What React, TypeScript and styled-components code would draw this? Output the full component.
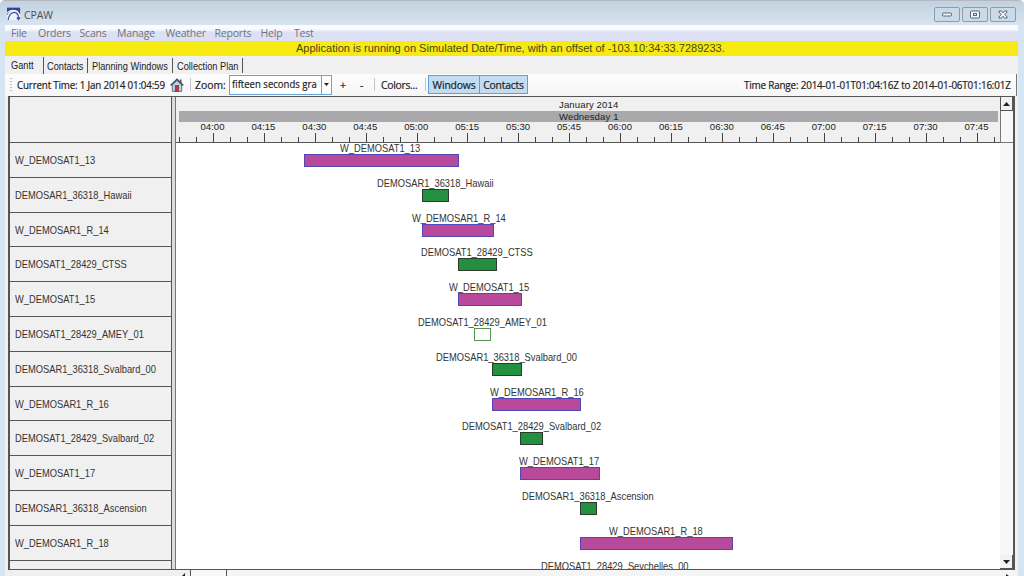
import React from "react";
import styled, { createGlobalStyle, css } from "styled-components";

const Global = createGlobalStyle`
  * { box-sizing: border-box; }
  html, body { margin: 0; padding: 0; overflow: hidden; }
`;

const ui = `"Open Sans", "Noto Sans", sans-serif`;
const sans = `"Liberation Sans", Arial, sans-serif`;

const Frame = styled.div`
  width: 1024px;
  height: 576px;
  overflow: hidden;
  display: flex;
  flex-direction: column;
  background: #d6e5f2;
  border-top: 1px solid #b4b9c1;
  border-radius: 5px 5px 0 0;
  color: #333;
`;

const Condensed = styled.span<{ $k: number }>`
  display: inline-block;
  transform: scaleX(${(p) => p.$k});
  transform-origin: left center;
  white-space: nowrap;
`;

const TitleBar = styled.header`
  height: 24px;
  flex: none;
  display: flex;
  align-items: flex-start;
  padding: 6px 8px 0 7px;
  background: linear-gradient(#c3d0df, #cddae7 50%, #d8e5f0);
`;

const Title = styled.h1`
  margin: 0 auto 0 3px;
  font: 400 10.5px/16px ${ui};
  letter-spacing: -0.1px;
  color: #4a4f57;
`;

const WinButtons = styled.div`
  display: flex;
  gap: 2px;
`;

const WinButton = styled.button`
  width: 26px;
  height: 15px;
  padding: 0;
  display: grid;
  place-items: center;
  background: #cbdae8;
  border: 1px solid #8d9cae;
  border-radius: 2px;
`;

const Client = styled.div`
  flex: 1;
  min-height: 0;
  margin: 0 6px 0 5px;
  display: flex;
  flex-direction: column;
  background: #f0f0f1;
`;

const MenuBar = styled.nav`
  height: 16px;
  flex: none;
  display: flex;
  padding-left: 6px;
  background: linear-gradient(#fafbfe 0 25%, #dde1f2 45%, #dce0f2);
`;

const MenuItem = styled.span<{ $w: number }>`
  width: ${(p) => p.$w}px;
  font: 400 10.5px/16px ${ui};
  letter-spacing: -0.2px;
  color: #70737f;
`;

const Banner = styled.div`
  height: 15px;
  flex: none;
  padding-left: 291px;
  background: #f6ea12;
  font: 400 11.5px/15px ${sans};
  white-space: nowrap;
  color: #4a4619;
`;

const Tabs = styled.div`
  height: 18px;
  flex: none;
  display: flex;
  align-items: flex-end;
  padding-left: 6px;
`;

const Tab = styled.span<{ $w: number; $active?: boolean }>`
  width: ${(p) => p.$w}px;
  height: ${(p) => (p.$active ? 17 : 15)}px;
  margin-bottom: ${(p) => (p.$active ? 0 : 1)}px;
  padding-left: ${(p) => (p.$active ? 0 : 3.5)}px;
  border-right: 1px solid #555;
  font: 400 10.6px/${(p) => (p.$active ? 16 : 17)}px ${sans};
  white-space: nowrap;
  color: #222;
`;

const Toolbar = styled.div`
  height: 22px;
  flex: none;
  display: flex;
  align-items: center;
  padding: 0 0 1px 5px;
  margin-right: 1px;
  background: linear-gradient(#fdfdfd, #f6f6f7);
  border-right: 1px solid #777;
  font: 400 10.4px/20px ${ui};
  white-space: nowrap;
  color: #222;
`;

const Grip = styled.i`
  width: 2px;
  height: 13px;
  background: repeating-linear-gradient(#b9bcc4 0 1px, transparent 1px 3px);
`;

const ToolText = styled.span<{ $w: number; $ls?: number; $ml?: number; $end?: boolean }>`
  width: ${(p) => p.$w}px;
  margin-left: ${(p) => (p.$end ? "auto" : `${p.$ml ?? 0}px`)};
  letter-spacing: ${(p) => p.$ls ?? 0}px;
  -webkit-text-stroke: 0.2px currentColor;
`;

const Divider = styled.i<{ $ml: number }>`
  width: 1px;
  height: 13px;
  margin-left: ${(p) => p.$ml}px;
  background: #c4c5ca;
`;

const Combo = styled.div`
  width: 103px;
  height: 20px;
  display: flex;
  border: 1px solid #68a2da;
  background: #fff;
`;

const ComboValue = styled.span`
  width: 91px;
  padding-left: 2px;
  line-height: 17px;
  -webkit-text-stroke: 0.2px currentColor;
`;

const ComboArrow = styled.span`
  flex: 1;
  display: grid;
  place-items: center;
  border-left: 1px solid #68a2da;
`;

const Toggles = styled.div`
  display: flex;
  margin-left: 2px;
`;

const Toggle = styled.button<{ $w: number }>`
  width: ${(p) => p.$w}px;
  height: 19px;
  margin-right: -1px;
  padding: 0;
  border: 1px solid #5fa0dc;
  background: #c1dcf3;
  font: 400 10.4px/16px ${ui};
  letter-spacing: -0.2px;
  -webkit-text-stroke: 0.2px currentColor;
  color: #222;
`;

const Chart = styled.main`
  height: 474px;
  flex: none;
  margin: 0 3px 0 3px;
  display: flex;
  border: 1px solid #555;
  border-left-width: 2px;
  border-right-width: 2px;
  overflow: hidden;
`;

const NameColumn = styled.aside`
  width: 162px;
  flex: none;
  border-right: 1px solid #555;
`;

const NameHead = styled.div`
  height: 46px;
  border-bottom: 1px solid #555;
`;

const label = css`
  font: 400 10.6px/13px ${sans};
  white-space: nowrap;
  color: #333;
`;

const NameCell = styled.div`
  ${label}
  height: 34.8px;
  padding: 11px 0 0 5px;
  border-bottom: 1px solid #555;
`;

const Splitter = styled.div`
  width: 4px;
  flex: none;
  background: #dcdcdd;
  border-right: 1px solid #777;
`;

const Timeline = styled.section`
  flex: 1;
  min-width: 0;
  display: flex;
  flex-direction: column;
`;

const Scale = styled.div`
  height: 46px;
  flex: none;
  display: flex;
  flex-direction: column;
  padding: 0 2px 0 3px;
  border-bottom: 1px solid #555;
  overflow: hidden;
`;

const Month = styled.div<{ $day?: boolean }>`
  height: ${(p) => (p.$day ? 11 : 14)}px;
  flex: none;
  padding-left: 380px;
  background: ${(p) => (p.$day ? "#a9a9ac" : "#f0f0f1")};
  font: 400 9.6px/${(p) => (p.$day ? 11 : 15)}px ${sans};
  letter-spacing: 0.1px;
  white-space: nowrap;
  color: #222;
`;

const Hours = styled.div`
  height: 11px;
  flex: none;
  display: flex;
  padding-left: 8px;
`;

const Hour = styled.span`
  width: 50.95px;
  flex: none;
  text-align: center;
  font: 400 9.6px/10px ${sans};
  color: #222;
`;

const Ticks = styled.div`
  flex: 1;
  display: flex;
  align-items: flex-end;
`;

const Tick = styled.i<{ $major: boolean }>`
  width: 16.983px;
  flex: none;
  height: ${(p) => (p.$major ? 9 : 5)}px;
  border-left: 1px solid #444;
`;

const Lanes = styled.div`
  flex: 1;
  min-height: 0;
  overflow: hidden;
  background: #fff;
`;

const Lane = styled.div`
  height: 34.8px;
  display: flex;
  flex-direction: column;
  align-items: flex-start;
`;

const LaneLabel = styled.span<{ $x: number }>`
  ${label}
  height: 11px;
  margin-left: ${(p) => p.$x - 176}px;
  line-height: 10px;
`;

const kinds = {
  window: css`
    background: #b9499b;
    border: 1px solid #5148b5;
  `,
  contact: css`
    background: #23903f;
    border: 1px solid #2c3b2d;
  `,
  empty: css`
    background: #fff;
    border: 1px solid #55924f;
  `,
};

type Kind = keyof typeof kinds;

const Bar = styled.div<{ $x: number; $w: number; $kind: Kind }>`
  height: 13px;
  margin-left: ${(p) => p.$x - 176}px;
  width: ${(p) => p.$w}px;
  ${(p) => kinds[p.$kind]}
`;

const Scroll = styled.div`
  width: 13px;
  flex: none;
  display: flex;
  flex-direction: column;
  background: #f7f7f7;
`;

const ScrollButton = styled.span<{ $bottom?: boolean }>`
  height: 14px;
  flex: none;
  display: grid;
  place-items: center;
  background: #f2f2f2;
  border: 1px solid #555;
  border-width: ${(p) => (p.$bottom ? "0 1px 1px 0" : "0 1px 1px 1px")};
`;

const ScrollThumb = styled.span`
  height: 32px;
  flex: none;
  background: #f7f7f7;
  border: 1px solid #777;
  border-width: 0 0 1px 1px;
`;

const ScrollTrack = styled.span`
  flex: 1;
`;

const BottomScroll = styled.footer`
  flex: 1;
  display: flex;
  align-items: flex-start;
  padding-left: 176px;
`;

const BottomThumb = styled.span`
  width: 37px;
  height: 6px;
  margin-left: 3px;
  border: 1px solid #555;
  border-width: 0 1px;
  background: #f8f8f8;
`;

const BottomTrack = styled.span`
  flex: 1;
  height: 6px;
  background: #f5f5f5;
  display: flex;
  justify-content: flex-end;
  padding: 4px 9px 0 0;
`;

const Triangle = ({ up = false, size = 7 }: { up?: boolean; size?: number }) => (
  <svg width={size} height={size > 6 ? 4 : 3} viewBox="0 0 8 4" preserveAspectRatio="none">
    <path d={up ? "M0 4L4 0L8 4Z" : "M0 0H8L4 4Z"} fill="#222" />
  </svg>
);

const AppIcon = () => (
  <svg width="14" height="14" viewBox="0 0 14 14">
    <rect width="13.5" height="13" fill="#eef2f9" />
    <path d="M0 0.5H13.2V7.5L10.5 3.8L7 3L3 4.5L0 8Z" fill="#3243a3" />
    <path d="M0 6Q4 2.800 7.500 3.600Q11 4.500 11.600 8" fill="none" stroke="#f3f6fc" strokeWidth="1.2" />
    <path d="M1.2 13Q1.500 8.500 5 6Q10 4 11.500 9.500V12.500M9.800 10.500L11.500 12.500L13.200 10.500" fill="none" stroke="#3f51a4" strokeWidth="1.2" />
  </svg>
);

const HomeIcon = () => (
  <svg width="14" height="14" viewBox="0 0 14 14">
    <path d="M10 1.5H11.5V5H10Z" fill="#8a3b3b" />
    <path d="M2.3 7L7 2.5L11.7 7V13.3H2.3Z" fill="#c6d5e3" stroke="#456078" strokeWidth="0.9" />
    <path d="M0.7 7.5L7 1.3L13.3 7.5" fill="none" stroke="#34516e" strokeWidth="1.6" />
    <rect x="5.2" y="7.3" width="3.6" height="6" fill="#b13c43" stroke="#6d3842" strokeWidth="0.6" />
  </svg>
);

const glyph = { fill: "#f3f6f9", stroke: "#5b6672", strokeWidth: 1 };

const menu: [string, number][] = [
  ["File", 27], ["Orders", 41.5], ["Scans", 37.5], ["Manage", 48.5],
  ["Weather", 49], ["Reports", 46], ["Help", 33.5], ["Test", 30],
];

const hours = Array.from({ length: 16 }, (_, i) => {
  const m = 240 + i * 15;
  return `0${Math.floor(m / 60)}:${String(m % 60).padStart(2, "0")}`;
});

interface Row { name: string; labelX: number; x: number; w: number; kind: Kind }

const rows: Row[] = [
  { name: "W_DEMOSAT1_13", labelX: 340, x: 304, w: 155, kind: "window" },
  { name: "DEMOSAR1_36318_Hawaii", labelX: 376.5, x: 422, w: 27, kind: "contact" },
  { name: "W_DEMOSAR1_R_14", labelX: 411.5, x: 422, w: 72, kind: "window" },
  { name: "DEMOSAT1_28429_CTSS", labelX: 421, x: 457.5, w: 39.5, kind: "contact" },
  { name: "W_DEMOSAT1_15", labelX: 449, x: 457.5, w: 64, kind: "window" },
  { name: "DEMOSAT1_28429_AMEY_01", labelX: 418, x: 474, w: 17, kind: "empty" },
  { name: "DEMOSAR1_36318_Svalbard_00", labelX: 436, x: 492, w: 30, kind: "contact" },
  { name: "W_DEMOSAR1_R_16", labelX: 490, x: 492, w: 89, kind: "window" },
  { name: "DEMOSAT1_28429_Svalbard_02", labelX: 462, x: 520, w: 23, kind: "contact" },
  { name: "W_DEMOSAT1_17", labelX: 519, x: 520, w: 80, kind: "window" },
  { name: "DEMOSAR1_36318_Ascension", labelX: 522, x: 580, w: 17, kind: "contact" },
  { name: "W_DEMOSAR1_R_18", labelX: 609, x: 580, w: 153, kind: "window" },
];

const NAME_SCALE = 0.88;

export default function App() {
  return (
    <>
      <Global />
      <Frame>
        <TitleBar>
          <AppIcon />
          <Title>CPAW</Title>
          <WinButtons>
            <WinButton aria-label="Minimize">
              <svg width="10" height="5"><rect x="0.5" y="1" width="9" height="3" rx="1" {...glyph} /></svg>
            </WinButton>
            <WinButton aria-label="Restore">
              <svg width="10" height="9"><rect x="0.5" y="1" width="9" height="7" rx="1" {...glyph} /><rect x="3.5" y="3.5" width="3" height="2" {...glyph} /></svg>
            </WinButton>
            <WinButton aria-label="Close">
              <svg width="10" height="9" viewBox="0 0 10 9"><path d="M1 1H3.5L5 2.8L6.5 1H9V2L6.8 4.5L9 7V8H6.5L5 6.2L3.5 8H1V7L3.2 4.5L1 2Z" {...glyph} /></svg>
            </WinButton>
          </WinButtons>
        </TitleBar>
        <Client>
          <MenuBar>
            {menu.map(([t, w]) => <MenuItem key={t} $w={w}>{t}</MenuItem>)}
          </MenuBar>
          <Banner>
            <Condensed $k={0.958}>
              Application is running on Simulated Date/Time, with an offset of -103.10:34:33.7289233.
            </Condensed>
          </Banner>
          <Tabs>
            <Tab $w={32.5} $active><Condensed $k={0.87}>Gantt</Condensed></Tab>
            <Tab $w={44.5}><Condensed $k={0.87}>Contacts</Condensed></Tab>
            <Tab $w={85}><Condensed $k={0.87}>Planning Windows</Condensed></Tab>
            <Tab $w={70}><Condensed $k={0.87}>Collection Plan</Condensed></Tab>
          </Tabs>
          <Toolbar>
            <Grip />
            <ToolText $ml={5} $w={153} $ls={-0.2}>
              <Condensed $k={0.945}>Current Time: 1 Jan 2014 01:04:59</Condensed>
            </ToolText>
            <HomeIcon />
            <Divider $ml={6} />
            <ToolText $ml={4} $w={34}>Zoom:</ToolText>
            <Combo>
              <ComboValue><Condensed $k={0.92}>fifteen seconds gra</Condensed></ComboValue>
              <ComboArrow><Triangle size={5} /></ComboArrow>
            </Combo>
            <ToolText $ml={8} $w={20}>+</ToolText>
            <ToolText $w={14}>-</ToolText>
            <Divider $ml={0} />
            <ToolText $ml={6} $w={41} $ls={-0.3}>Colors...</ToolText>
            <Divider $ml={3} />
            <Toggles>
              <Toggle $w={52}>Windows</Toggle>
              <Toggle $w={49}>Contacts</Toggle>
            </Toggles>
            <ToolText $w={272.5} $ls={-0.2} $end>
              <Condensed $k={0.952}>Time Range: 2014-01-01T01:04:16Z to 2014-01-06T01:16:01Z</Condensed>
            </ToolText>
          </Toolbar>
          <Chart>
            <NameColumn>
              <NameHead />
              {rows.map((r) => (
                <NameCell key={r.name}><Condensed $k={NAME_SCALE}>{r.name}</Condensed></NameCell>
              ))}
            </NameColumn>
            <Splitter />
            <Timeline>
              <Scale>
                <Month>January 2014</Month>
                <Month $day>Wednesday 1</Month>
                <Hours>{hours.map((h) => <Hour key={h}>{h}</Hour>)}</Hours>
                <Ticks>
                  {Array.from({ length: 49 }, (_, i) => <Tick key={i} $major={i % 3 === 2} />)}
                </Ticks>
              </Scale>
              <Lanes>
                {rows.map((r) => (
                  <Lane key={r.name}>
                    <LaneLabel $x={r.labelX}><Condensed $k={NAME_SCALE}>{r.name}</Condensed></LaneLabel>
                    <Bar $x={r.x} $w={r.w} $kind={r.kind} />
                  </Lane>
                ))}
                <Lane>
                  <LaneLabel $x={541}><Condensed $k={NAME_SCALE}>DEMOSAT1_28429_Seychelles_00</Condensed></LaneLabel>
                </Lane>
              </Lanes>
            </Timeline>
            <Scroll>
              <ScrollButton><Triangle up /></ScrollButton>
              <ScrollThumb />
              <ScrollTrack />
              <ScrollButton $bottom><Triangle /></ScrollButton>
            </Scroll>
          </Chart>
          <BottomScroll>
            <svg width="6" height="6"><path d="M1 6L4 3V6Z" fill="#222" /></svg>
            <BottomThumb />
            <BottomTrack><svg width="3" height="2"><path d="M0 0L3 2H0Z" fill="#222" /></svg></BottomTrack>
          </BottomScroll>
        </Client>
      </Frame>
    </>
  );
}
